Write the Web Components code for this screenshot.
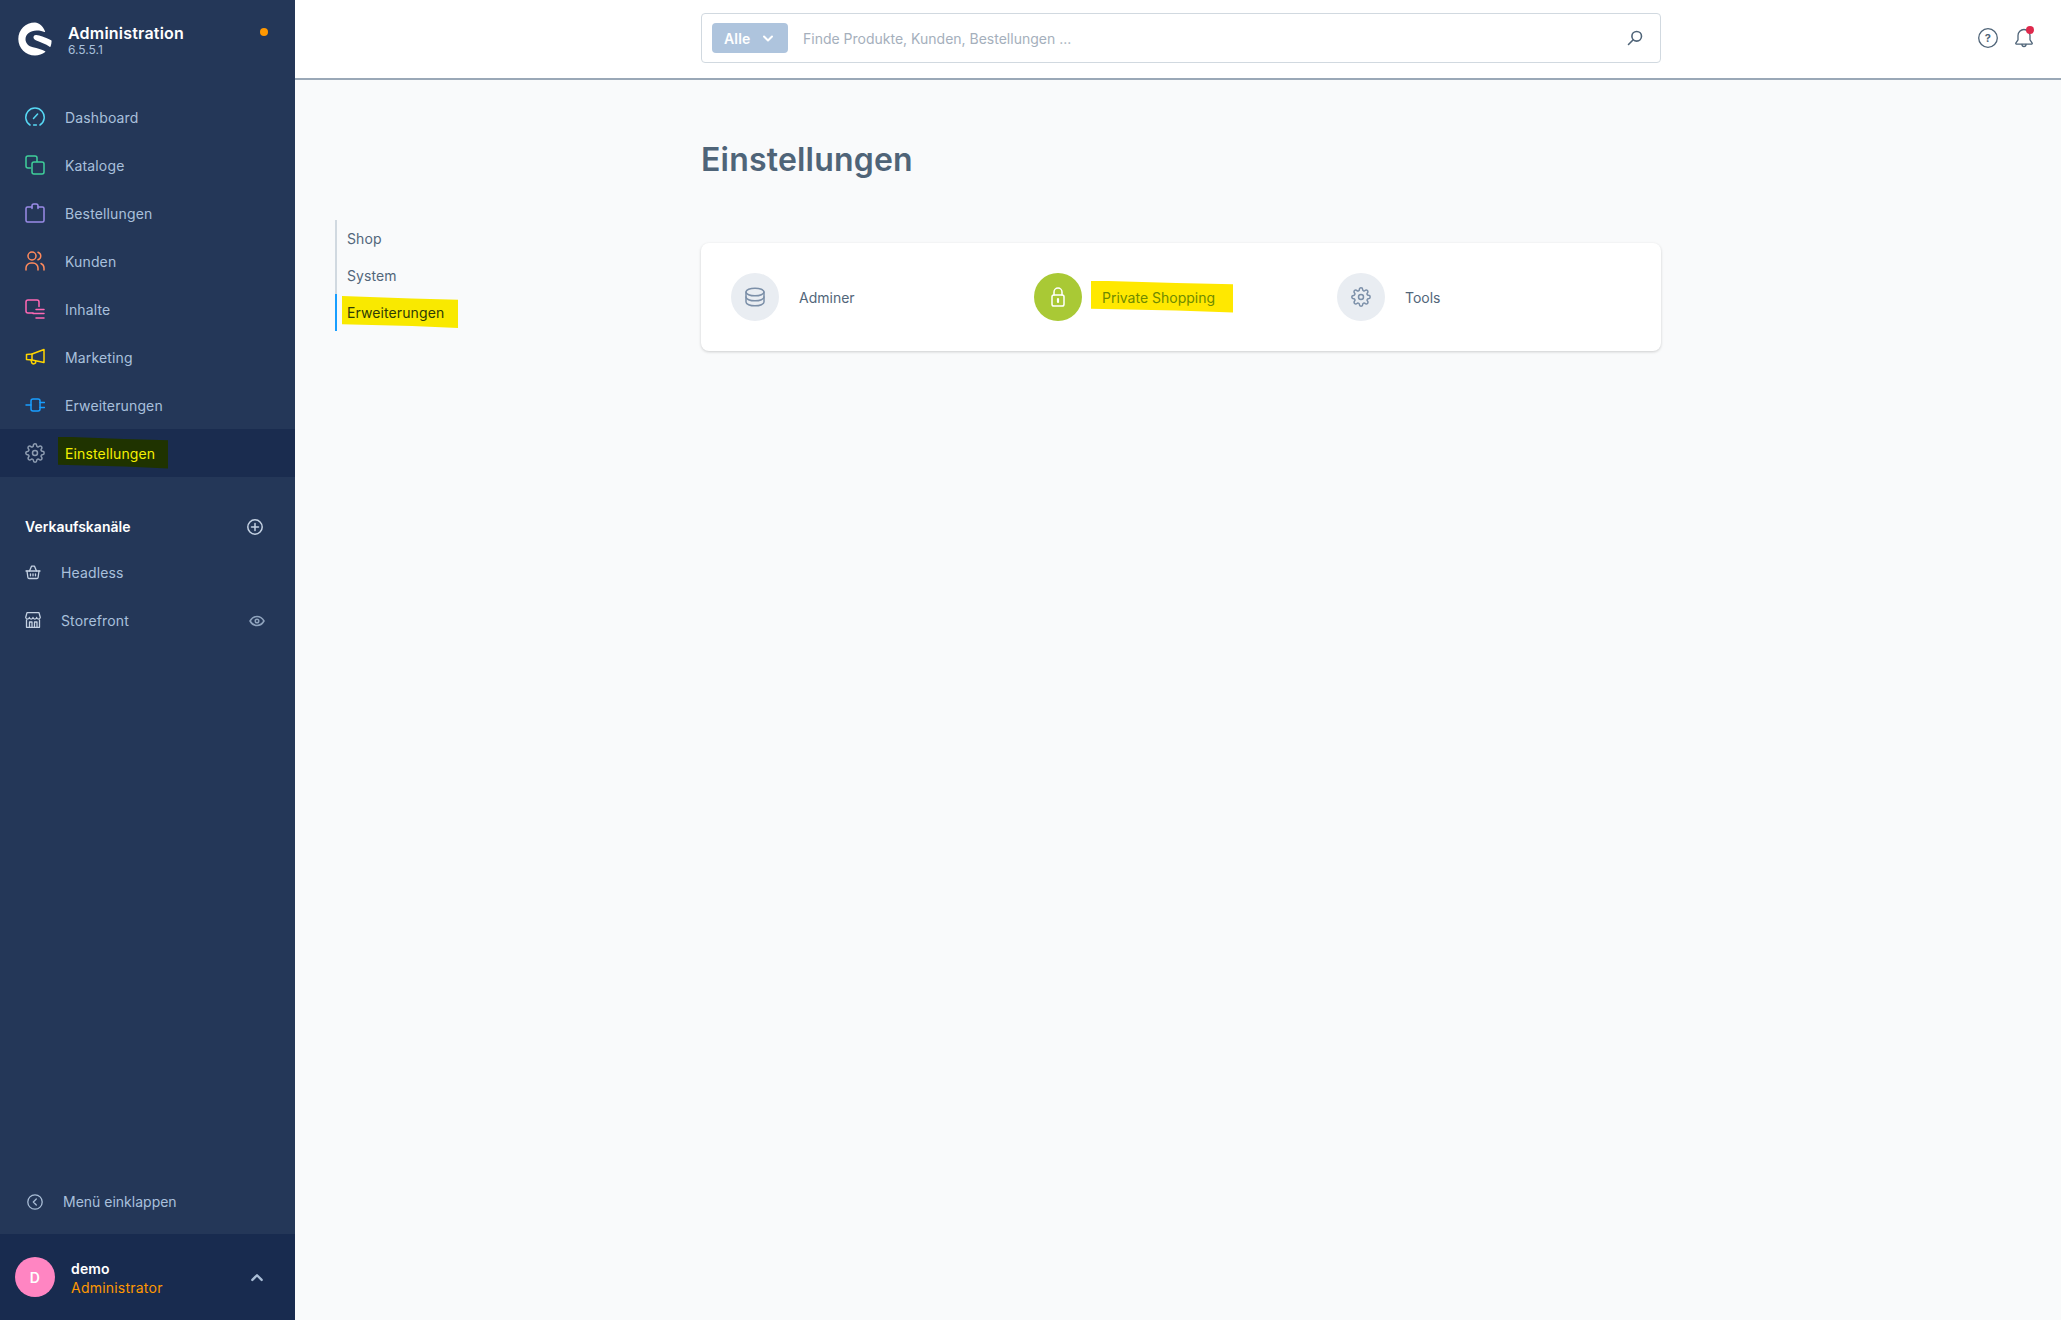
<!DOCTYPE html>
<html lang="de">
<head>
<meta charset="utf-8">
<title>Einstellungen</title>
<style>
  html, body { margin: 0; height: 100%; }
  body { font-family: Inter, "Noto Sans", sans-serif; font-size: 14px; letter-spacing: .14px; background: #f9fafb; }
</style>
</head>
<body>
<sw-admin>
  <sw-sidebar slot="side">
    <sw-nav-item icon="dashboard" tint="#57d9f5">Dashboard</sw-nav-item>
    <sw-nav-item icon="catalog" tint="#3fcf9a">Kataloge</sw-nav-item>
    <sw-nav-item icon="bag" tint="#9a8ce8">Bestellungen</sw-nav-item>
    <sw-nav-item icon="users" tint="#ff8a5c">Kunden</sw-nav-item>
    <sw-nav-item icon="content" tint="#ff68b4">Inhalte</sw-nav-item>
    <sw-nav-item icon="megaphone" tint="#ffd500">Marketing</sw-nav-item>
    <sw-nav-item icon="plug" tint="#189eff">Erweiterungen</sw-nav-item>
    <sw-nav-item icon="gear" tint="#8d9cb1" active><sw-marker paint="#1f3300" ink="#f4f000" style="--l:7px;--r:13px">Einstellungen</sw-marker></sw-nav-item>
    <sw-channels slot="channels">
      <sw-channel icon="basket">Headless</sw-channel>
      <sw-channel icon="store" eye>Storefront</sw-channel>
    </sw-channels>
  </sw-sidebar>
  <sw-topbar slot="top"></sw-topbar>
  <sw-settings-tabs slot="tabs">
    <sw-tab>Shop</sw-tab>
    <sw-tab>System</sw-tab>
    <sw-tab active><sw-marker paint="#f9e900" ink="#2e3b06" style="--l:5px;--r:14px">Erweiterungen</sw-marker></sw-tab>
  </sw-settings-tabs>
  <sw-page-title slot="title">Einstellungen</sw-page-title>
  <sw-settings-card slot="card">
    <sw-settings-item icon="db">Adminer</sw-settings-item>
    <sw-settings-item icon="lock" on><sw-marker paint="#ffe800" ink="#6f8a00" style="--l:11px;--r:18px">Private Shopping</sw-marker></sw-settings-item>
    <sw-settings-item icon="gear">Tools</sw-settings-item>
  </sw-settings-card>
</sw-admin>

<script>
// Alle Icons an einer Stelle, currentColor kommt vom Host
const stroke = (body, box = 20, sw = 1.5) =>
  `<svg viewBox="0 0 ${box} ${box}" fill="none" stroke="currentColor" stroke-width="${sw}" stroke-linecap="round" stroke-linejoin="round">${body}</svg>`;

const ICONS = {
  gear: stroke(`<circle cx="12" cy="12" r="3"/><path d="M19.4 15a1.65 1.65 0 0 0 .33 1.82l.06.06a2 2 0 0 1 0 2.83 2 2 0 0 1-2.83 0l-.06-.06a1.65 1.65 0 0 0-1.82-.33 1.65 1.65 0 0 0-1 1.51V21a2 2 0 0 1-2 2 2 2 0 0 1-2-2v-.09A1.65 1.65 0 0 0 9 19.4a1.65 1.65 0 0 0-1.82.33l-.06.06a2 2 0 0 1-2.83 0 2 2 0 0 1 0-2.83l.06-.06a1.65 1.65 0 0 0 .33-1.82 1.65 1.65 0 0 0-1.51-1H3a2 2 0 0 1-2-2 2 2 0 0 1 2-2h.09A1.65 1.65 0 0 0 4.6 9a1.65 1.65 0 0 0-.33-1.82l-.06-.06a2 2 0 0 1 0-2.83 2 2 0 0 1 2.83 0l.06.06a1.65 1.65 0 0 0 1.82.33H9a1.65 1.65 0 0 0 1-1.51V3a2 2 0 0 1 2-2 2 2 0 0 1 2 2v.09a1.65 1.65 0 0 0 1 1.51 1.65 1.65 0 0 0 1.82-.33l.06-.06a2 2 0 0 1 2.83 0 2 2 0 0 1 0 2.83l-.06.06a1.65 1.65 0 0 0-.33 1.82V9a1.65 1.65 0 0 0 1.51 1H21a2 2 0 0 1 2 2 2 2 0 0 1-2 2h-.09a1.65 1.65 0 0 0-1.51 1z"/>`, 24, 1.8),
  dashboard: stroke(`<path d="M5 18A9.2 9.2 0 1 1 15 18"/><path d="M8.600 17.900h2.800"/><path d="M8.500 11.500 12.600 7"/>`),
  catalog: stroke(`<path d="M5.500 13H3a2 2 0 0 1-2-2V3a2 2 0 0 1 2-2h7a2 2 0 0 1 2 2v3.500"/><rect x="7" y="7" width="12" height="12" rx="2"/>`),
  bag: stroke(`<path d="M7 4H2.500A1.500 1.500 0 0 0 1 5.500v12A1.500 1.500 0 0 0 2.500 19h15a1.500 1.500 0 0 0 1.500-1.500v-12A1.500 1.500 0 0 0 17.500 4H13"/><path d="M7 5.500V2.800A1.800 1.800 0 0 1 8.800 1h2.400A1.800 1.800 0 0 1 13 2.800v2.700"/>`),
  users: stroke(`<circle cx="7" cy="5" r="4"/><path d="M1 19v-2a5 5 0 0 1 5-5h2a5 5 0 0 1 5 5v2"/><path d="M13 1.200a4 4 0 0 1 0 7.600"/><path d="M16 12.500a5 5 0 0 1 3 4.500v2"/>`),
  content: stroke(`<path d="M8 14H3a2 2 0 0 1-2-2V3a2 2 0 0 1 2-2h9a2 2 0 0 1 2 2v4.500"/><path d="M11 10.500h8M8 14.500h11M11 19h8"/>`),
  megaphone: stroke(`<path d="M1.500 7.500 7 7 19 2.500v13L7 13 1.500 12.500z"/><path d="M7 7v6"/><path d="M6 13l.8 2.800a1.500 1.500 0 0 0 1.900 1l1-.3a1.500 1.500 0 0 0 1-1.800l-.2-.8"/>`),
  plug: stroke(`<rect x="6" y="4" width="9" height="12" rx="2"/><path d="M1 10h5M15 7.500h4.500M15 12.500h4.500"/>`),
  basket: stroke(`<path d="M1 7h14"/><path d="M2 7l.9 6.500a1.200 1.200 0 0 0 1.200 1h7.800a1.200 1.200 0 0 0 1.200-1L14 7"/><path d="M4.500 7 6.500 2.200h3L11.500 7"/><path d="M5.500 9.800v2M8 9.800v2M10.500 9.800v2"/>`, 16, 1.3),
  store: stroke(`<path d="M2 .7h12l1.300 4.800a1.850 1.850 0 0 1-3.650 0 1.850 1.850 0 0 1-3.650 0 1.850 1.850 0 0 1-3.650 0 1.850 1.850 0 0 1-3.650 0z"/><path d="M1.500 8v7.300h13V8"/><path d="M4.500 15V10h2.500v5M9.500 15V10H12v5"/>`, 16, 1.3),
  eye: stroke(`<path d="M1 8s2.600-4.500 7-4.500S15 8 15 8s-2.600 4.500-7 4.500S1 8 1 8z"/><circle cx="8" cy="8" r="1.800"/>`, 16, 1.5),
  plus: stroke(`<circle cx="8" cy="8" r="7.200"/><path d="M8 4.500v7M4.500 8h7"/>`, 16, 1.5),
  back: stroke(`<circle cx="8" cy="8" r="7.200"/><path d="M9.300 5 6.300 8l3 3"/>`, 16, 1.3),
  up: stroke(`<path d="M2 8.500 6 4.500l4 4"/>`, 12, 2),
  down: stroke(`<path d="M2 4.500l4 4 4-4"/>`, 12, 2),
  search: stroke(`<circle cx="9.700" cy="6.300" r="4.800"/><path d="M6.200 9.800 1.500 14.500"/>`, 16, 1.6),
  help: stroke(`<circle cx="10" cy="10" r="9.300"/>`, 20, 1.3),
  bell: stroke(`<path d="M10 1.500A6 6 0 0 0 4 7.500v4.300L1.800 15.200a.6.600 0 0 0 .5.900h15.400a.6.600 0 0 0 .5-.9L16 11.800V7.500a6 6 0 0 0-6-6z"/><path d="M8 16.500a2 2 0 0 0 4 0"/>`, 20, 1.3),
  db: stroke(`<ellipse cx="10" cy="5" rx="9" ry="3.800"/><path d="M1 5v10c0 2.100 4 3.800 9 3.800s9-1.700 9-3.800V5"/><path d="M1 10c0 2.100 4 3.800 9 3.800s9-1.700 9-3.800"/>`, 20, 1.5),
  lock: stroke(`<path d="M6 8V5a4 4 0 0 1 8 0v3"/><rect x="4" y="8" width="12" height="11" rx="1.800"/><path d="M10 12v3" stroke-width="2.200"/>`, 20, 1.5),
};

class SwIcon extends HTMLElement {
  static get observedAttributes() {
    return ["name"];
  }
  constructor() {
    super();
    this.attachShadow({ mode: "open" });
  }
  attributeChangedCallback() {
    this.shadowRoot.innerHTML = `<style>
      :host { display: inline-flex; width: 20px; height: 20px; flex: none; }
      svg { width: 100%; height: 100%; display: block; }
    </style>${ICONS[this.getAttribute("name")] || ""}`;
  }
}
customElements.define("sw-icon", SwIcon);

function define(name, css, html, init) {
  const tpl = document.createElement("template");
  tpl.innerHTML = `<style>${css}</style>${html}`;
  customElements.define(name, class extends HTMLElement {
    constructor() {
      super();
      this.attachShadow({ mode: "open" }).appendChild(tpl.content.cloneNode(true));
    }
    connectedCallback() {
      if (init) init(this, this.shadowRoot);
    }
  });
}

/* marker stroke painted behind a piece of text */
define("sw-marker", `
  :host { display: inline-block; position: relative; isolation: isolate; color: var(--ink); }
  .paint { position: absolute; z-index: -1; left: calc(var(--l) * -1); right: calc(var(--r) * -1); top: -8px; bottom: -7px;
           background: var(--paint); clip-path: polygon(0 0, 60% 8%, 100% 12%, 100% 100%, 60% 94%, 0 88%); }
`, `<span class="paint"></span><slot></slot>`, (el) => {
  el.style.setProperty("--paint", el.getAttribute("paint"));
  el.style.setProperty("--ink", el.getAttribute("ink"));
});

define("sw-admin", `
  :host { display: grid; grid-template-columns: 295px 1fr; height: 100vh; overflow: hidden; }
  .main { display: flex; flex-direction: column; min-width: 0; }
  .body { flex: 1; display: grid; grid-template-columns: 406px 960px 1fr; }
  .tabs { padding: 140px 0 0 40px; }
  .center { padding-top: 60px; display: flex; flex-direction: column; gap: 63px; }
`, `
  <slot name="side"></slot>
  <div class="main">
    <slot name="top"></slot>
    <div class="body">
      <div class="tabs"><slot name="tabs"></slot></div>
      <div class="center"><slot name="title"></slot><slot name="card"></slot></div>
    </div>
  </div>
`);

define("sw-sidebar", `
  :host { display: flex; flex-direction: column; background: #243758; color: #a9c0dc; height: 100vh; }
  header { height: 93px; box-sizing: border-box; padding: 22px 27px 0 18px; display: flex; align-items: flex-start; gap: 16px; }
  .logo { width: 34px; height: 34px; flex: none; }
  .brand { padding-top: 1px; }
  .brand b { display: block; color: #fff; font-size: 16px; font-weight: 600; letter-spacing: .2px; line-height: 20px; }
  .brand span { display: block; font-size: 12px; line-height: 14px; letter-spacing: 0; color: #a9c0dc; }
  .dot { width: 8px; height: 8px; border-radius: 50%; background: #ff9800; margin: 6px 0 0 auto; }
  nav { display: flex; flex-direction: column; }
  .grow { flex: 1; }
  .collapse { height: 62px; display: flex; align-items: center; padding: 0 0 3px 27px; gap: 20px; box-sizing: border-box; letter-spacing: 0; }
  .collapse sw-icon { width: 16px; height: 16px; color: #a9bdd6; }
  footer { height: 86px; background: #182b4f; display: flex; align-items: center; padding: 0 31px 0 15px; gap: 16px; }
  .avatar { width: 40px; height: 40px; border-radius: 50%; background: #ff85c2; color: #fff; font-weight: 600;
            display: flex; align-items: center; justify-content: center; font-size: 14px; }
  .user { flex: 1; line-height: 19px; padding-top: 1px; }
  .user b { display: block; color: #fff; font-weight: 600; font-size: 14px; }
  .user span { color: #ff9800; font-size: 14px; letter-spacing: .22px; }
  footer sw-icon { width: 14px; height: 14px; color: #a9bdd6; }
`, `
  <header>
    <svg class="logo" viewBox="0 0 34 34">
      <path fill="#fff" d="M17 .5C7.500.5.300 7.800.300 17S7.800 33.500 17 33.500c3.800 0 7.300-1.300 10.200-3.400.3-.2.300-.7-.1-.9-3.200-1.700-7.800-3-12.100-3.900C10.700 24.500 7.500 21.400 7.500 17.300 7.500 12.100 12.300 8.500 18.600 8.500c3.400 0 6 .7 7.900 1.500.4.200.8-.3.600-.6C25 4.200 21 .5 17 .5z"/>
      <path fill="#fff" d="M18.300 13c3.700.4 7.800 1.700 14.800 5.300.3.200.5.400.5.800 0 1.900-.4 3.800-1 5.400-.2.500-.7.500-1 .2-3.800-2.700-9.500-5-13.300-6.300-2.200-.8-3-2-2.800-3.300.2-1.300 1.200-2.300 2.800-2.100z"/>
    </svg>
    <div class="brand"><b>Administration</b><span>6.5.5.1</span></div>
    <span class="dot"></span>
  </header>
  <nav><slot></slot></nav>
  <slot name="channels"></slot>
  <div class="grow"></div>
  <div class="collapse"><sw-icon name="back"></sw-icon><span>Menü einklappen</span></div>
  <footer>
    <div class="avatar">D</div>
    <div class="user"><b>demo</b><span>Administrator</span></div>
    <sw-icon name="up"></sw-icon>
  </footer>
`);

define("sw-nav-item", `
  :host { display: flex; align-items: center; height: 48px; padding-left: 25px; gap: 20px; color: #a9c0dc; box-sizing: border-box; }
  :host([active]) { background: #1a2c4f; }
`, `<sw-icon></sw-icon><span><slot></slot></span>`, (el, root) => {
  const icon = root.querySelector("sw-icon");
  icon.setAttribute("name", el.getAttribute("icon"));
  icon.style.color = el.getAttribute("tint");
});

define("sw-channels", `
  :host { display: block; padding-top: 27px; }
  .head { display: flex; align-items: center; justify-content: space-between; height: 44px; padding: 0 32px 0 25px; color: #fff; font-weight: 600; letter-spacing: 0; }
  .head sw-icon { width: 16px; height: 16px; color: #c5d2e3; margin-top: 2px; }
`, `<div class="head"><span>Verkaufskanäle</span><sw-icon name="plus"></sw-icon></div><slot></slot>`);

define("sw-channel", `
  :host { display: flex; align-items: center; height: 48px; padding: 0 30px 0 25px; gap: 20px; color: #a9c0dc; }
  sw-icon { width: 16px; height: 16px; color: #c5d2e3; }
  span { flex: 1; }
  .eye { color: #8fa3bd; margin-top: 2px; }
`, `<sw-icon></sw-icon><span><slot></slot></span><sw-icon class="eye"></sw-icon>`, (el, root) => {
  root.querySelector("sw-icon").setAttribute("name", el.getAttribute("icon"));
  if (el.hasAttribute("eye")) root.querySelector(".eye").setAttribute("name", "eye");
  else root.querySelector(".eye").remove();
});

define("sw-topbar", `
  :host { display: grid; grid-template-columns: 406px 960px 1fr; height: 80px; box-sizing: border-box; background: #fff; border-bottom: 2px solid #9aa8b7; align-items: center; }
  .search { grid-column: 2; height: 50px; box-sizing: border-box; border: 1px solid #d1d9e0; border-radius: 4px; display: flex; align-items: center; padding: 0 17px 0 10px; margin-top: -2px; }
  .type { width: 76px; height: 30px; box-sizing: border-box; background: #aec4dd; color: #fff; border-radius: 4px; font-weight: 600; display: flex; align-items: center; padding-left: 12px; gap: 12px; }
  .type sw-icon { width: 12px; height: 12px; }
  .ph { flex: 1; color: #a5afbc; padding-left: 15px; letter-spacing: 0; }
  .search > sw-icon { width: 16px; height: 16px; color: #4f6478; }
  .tools { display: flex; justify-content: flex-end; align-items: center; gap: 16px; padding-right: 27px; color: #4f6478; margin-top: -2px; }
  .help { position: relative; width: 20px; height: 20px; }
  .help b { position: absolute; inset: 0; display: flex; align-items: center; justify-content: center; font-size: 11px; font-weight: 700; }
  .bell { position: relative; width: 20px; height: 20px; }
  .bell i { position: absolute; right: 0; top: -2px; width: 8px; height: 8px; border-radius: 50%; background: #de294c; }
`, `
  <div class="search">
    <div class="type">Alle <sw-icon name="down"></sw-icon></div>
    <div class="ph">Finde Produkte, Kunden, Bestellungen ...</div>
    <sw-icon name="search"></sw-icon>
  </div>
  <div class="tools">
    <div class="help"><sw-icon name="help"></sw-icon><b>?</b></div>
    <div class="bell"><sw-icon name="bell"></sw-icon><i></i></div>
  </div>
`);

define("sw-settings-tabs", `
  :host { display: flex; flex-direction: column; }
`, `<slot></slot>`);

define("sw-tab", `
  :host { display: flex; align-items: center; height: 37px; padding-left: 10px; border-left: 2px solid #d1d9e0; color: #52667a; letter-spacing: .1px; }
  :host([active]) { border-left-color: #189eff; }
`, `<slot></slot>`);

define("sw-page-title", `
  :host { display: block; font-size: 32px; font-weight: 600; letter-spacing: .2px; line-height: 40px; color: #4f6478; }
`, `<slot></slot>`);

define("sw-settings-card", `
  :host { display: grid; grid-template-columns: repeat(3, 303px); height: 108px; box-sizing: border-box; padding: 30px; background: #fff; border-radius: 8px; box-shadow: 0 1px 3px rgba(0,0,0,.18); }
`, `<slot></slot>`);

define("sw-settings-item", `
  :host { display: flex; align-items: center; gap: 20px; color: #52667a; letter-spacing: 0; }
  .circle { width: 48px; height: 48px; border-radius: 50%; background: #e9edf2; color: #7b8fa8; display: flex; align-items: center; justify-content: center; flex: none; }
  :host([on]) .circle { background: #a9c935; color: #fff; }
`, `<div class="circle"><sw-icon></sw-icon></div><span><slot></slot></span>`, (el, root) => {
  root.querySelector("sw-icon").setAttribute("name", el.getAttribute("icon"));
});
</script>
</body>
</html>
